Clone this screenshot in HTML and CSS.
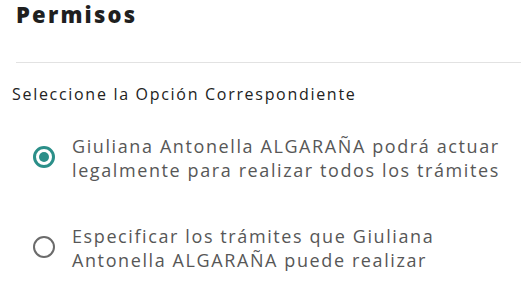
FILE: index.html
```html
<!DOCTYPE html>
<html lang="es">
<head>
    <meta charset="UTF-8">
    <meta name="viewport" content="width=device-width, initial-scale=1.0">
    <title>Permisos</title>
    <link rel="stylesheet" href="styles.css">
</head>
<body>

    <section class="permisos">
        <h2 class="titulo">Permisos</h2>
        <hr class="divisor">

        <p class="instruccion">Seleccione la Opción Correspondiente</p>

        <div class="opciones">
            <label class="opcion">
                <input type="radio" name="permiso" value="todos" checked>
                <span class="texto">Giuliana Antonella ALGARAÑA podrá actuar<br>legalmente para realizar todos los trámites</span>
            </label>

            <label class="opcion">
                <input type="radio" name="permiso" value="especificar">
                <span class="texto">Especificar los trámites que Giuliana<br>Antonella ALGARAÑA puede realizar</span>
            </label>
        </div>
    </section>

</body>
</html>
```

FILE: styles.css
```css
body {
    margin: 0;
    font-family: 'Open Sans', 'Noto Sans', sans-serif;
    background: #ffffff;
    color: #222222;
}

.titulo {
    margin: 0 0 34px 16px;
    font-size: 22px;
    line-height: 28px;
    font-weight: 800;
    letter-spacing: 2.2px;
    color: #1f1f1f;
}

.divisor {
    margin: 0 0 20px 16px;
    border: none;
    border-top: 1px solid #e2e2e2;
    height: 0;
}

.instruccion {
    margin: 0 0 29px 12px;
    font-size: 16px;
    line-height: 22px;
    letter-spacing: 1.7px;
    color: #222222;
}

.opciones {
    display: flex;
    flex-direction: column;
    gap: 42px;
    padding-left: 33px;
}

.opcion {
    display: flex;
    align-items: center;
    gap: 17px;
    cursor: pointer;
}

.opcion input[type="radio"] {
    appearance: none;
    -webkit-appearance: none;
    margin: 0;
    width: 22px;
    height: 22px;
    flex: none;
    border: 2px solid #6b6b6b;
    border-radius: 50%;
    position: relative;
    top: -1px;
}

.opcion input[type="radio"]:checked {
    border: 3px solid #2b8f89;
}

.opcion input[type="radio"]:checked::after {
    content: "";
    position: absolute;
    left: 3px;
    top: 3px;
    width: 10px;
    height: 10px;
    border-radius: 50%;
    background: #2b8f89;
}

.texto {
    font-size: 18px;
    line-height: 24px;
    letter-spacing: 1.6px;
    color: #575757;
}
```
